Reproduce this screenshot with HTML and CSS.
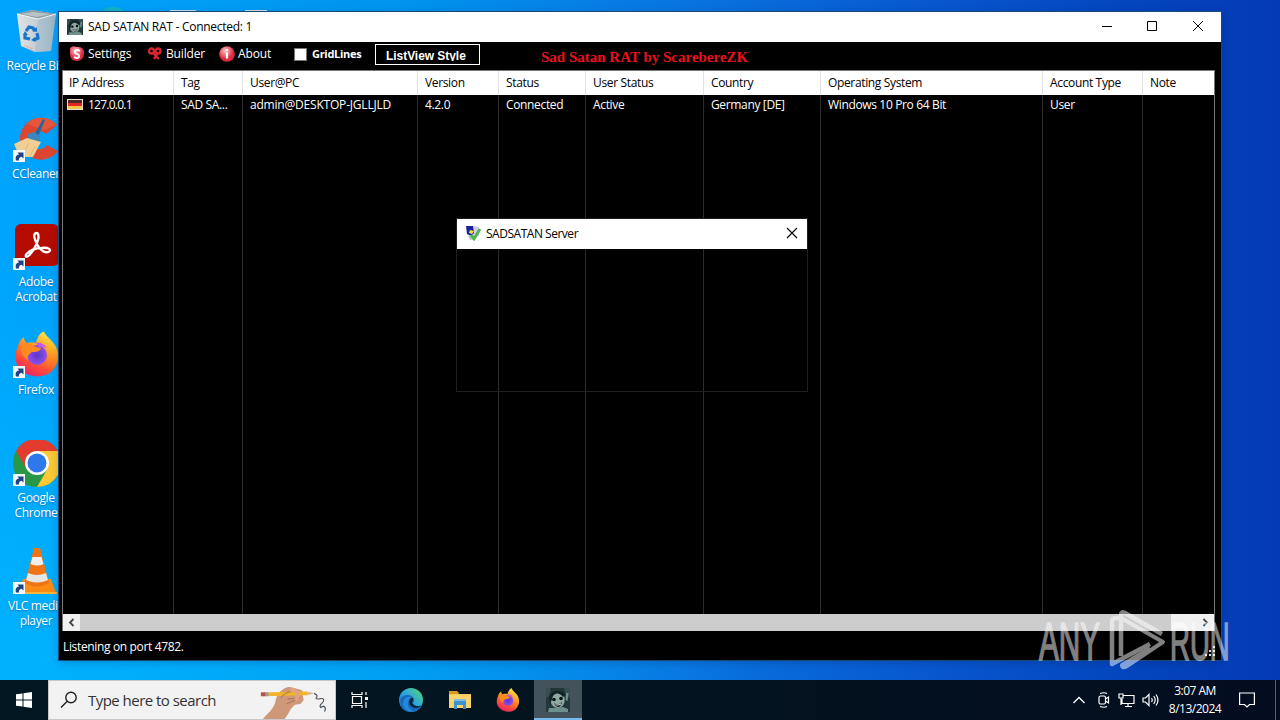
FILE: index.html
```html
<!DOCTYPE html>
<html lang="en">
<head>
<meta charset="utf-8">
<title>SAD SATAN RAT - Connected: 1</title>
<link rel="stylesheet" href="styles.css">
</head>
<body>
<svg width="0" height="0" class="defs">
  <defs>
    <linearGradient id="fox" x1="0.8" y1="0" x2="0.3" y2="1"><stop offset="0" stop-color="#fff04a"/><stop offset=".4" stop-color="#ff9a20"/><stop offset=".75" stop-color="#ff4a38"/><stop offset="1" stop-color="#e82070"/></linearGradient>
    <radialGradient id="globe"><stop offset="0" stop-color="#5b35c8"/><stop offset="1" stop-color="#9050ec"/></radialGradient>
    <linearGradient id="bin" x1="0" x2="1"><stop offset="0" stop-color="#dfe4e6"/><stop offset=".55" stop-color="#c3cdd2"/><stop offset="1" stop-color="#8fa9ba"/></linearGradient>
    <linearGradient id="edgeG" x1="0" y1="1" x2="1" y2="0"><stop offset="0" stop-color="#1264c0"/><stop offset=".5" stop-color="#2aa5e0"/><stop offset="1" stop-color="#5bd66a"/></linearGradient>
    <radialGradient id="red" cx=".4" cy=".3"><stop offset="0" stop-color="#ffc4c8"/><stop offset="1" stop-color="#dc2a40"/></radialGradient>
    <symbol id="shortcut" viewBox="0 0 12 12"><rect width="12" height="12" fill="#f5f8fa"/><path d="M3 10.500C2 7 3.500 4.800 6 4.600L4.500 2.500h6v6L8.600 6.700C6.400 7 5.600 8.500 6 10.500z" fill="#1f4484"/></symbol>
    <symbol id="firefox" viewBox="0 0 46 46">
      <path d="M4 15C5 11 7 8 10 6c0 3 1 5 3 6 3-1 6-1 9 0 1-6 4-10 8-12 1 5 7 8 11 14 6 10 3 21-4 27-8 6-21 6-29-1C0 33 0 24 4 15z" fill="url(#fox)"/>
      <circle cx="23" cy="24" r="10" fill="url(#globe)"/>
      <path d="M7 13c5-2 11 0 15 3l5 1c-1 4-6 4-9 4-3 2-5 4-4 8C8 26 6 20 7 13z" fill="#ff8a1e"/>
      <path d="M22 12c4-1 9 1 11 5-3-2-6-1-8-1z" fill="#c35af0"/>
    </symbol>
    <symbol id="face" viewBox="0 0 24 24">
      <rect width="24" height="24" fill="#0c1518"/>
      <path d="M0 3l7-3h12l5 6v18H0z" fill="#22383a"/>
      <path d="M0 0h5L3 8 0 10zM18 0h6v10l-4-2z" fill="#35504f"/>
      <path d="M5 9c2-6 11-7 13-1 2 6-1 12-6 12C7 20 3 15 5 9z" fill="#8faaa4"/>
      <path d="M3 10C5 1 15 0 20 7l-3 2c-3-4-7-5-10-1l-3 9z" fill="#142326"/>
      <circle cx="8" cy="11.500" r="1.800" fill="#091012"/><circle cx="15" cy="10.500" r="1.800" fill="#091012"/>
      <path d="M8 15q4 3 8-1-1 5-4 5-3-1-4-4z" fill="#1a1416"/>
      <path d="M9 16q3 1.500 6-.8v1.200q-3 1.800-5 .8z" fill="#dde6e2"/>
      <path d="M20 5l2.500 0-1 8-2-1zM3 20l8 0 6-1 5 2v3H2z" fill="#6f918e"/>
    </symbol>
  </defs>
</svg>

<div class="desktop">
  <div class="behind"><i class="behind-disc"></i><i class="behind-page"></i><i class="behind-page two"></i></div>
  <div class="icons">
    <div class="item">
      <svg class="pic" viewBox="0 0 48 48"><path d="M5 6l15-4 24 4-5 37-16 1-14-6z" fill="url(#bin)"/><path d="M5 6l15-4 24 4-18 5z" fill="#8a9ba2"/><path d="M9 6l12-2 18 2-14 3z" fill="#b9c4c8"/><path d="M26 11l18-5-5 37-16 1z" fill="#a3bccb" opacity=".6"/><path d="M5 6l21 5 18-5" fill="none" stroke="#f2f7f8"/><g fill="none" stroke="#1776cc" stroke-width="3.200"><path d="M14 23l3-4 4 1 2 3M25 25l1 5-4 2M18 31l-5-1 0-4"/></g><path d="M20 23l5 1 0-5zM23 29l-4 3 4 2zM11 27l2-4 3 4z" fill="#1776cc"/><path d="M13 37l8 3-1 2-9-5z" fill="#e8b7a0"/></svg>
      <span>Recycle Bin</span>
    </div>
    <div class="item">
      <svg class="pic" viewBox="0 0 48 48"><path d="M45 9A21 21 0 1 0 46 35l-11-6a9 9 0 1 1-1-11z" fill="#dc452f"/><path d="M45 9A21 21 0 0 0 14 8l18 6z" fill="#ec5f45" opacity=".6"/><path d="M31 3l2 1-8 19-4-2z" fill="#22689c"/><path d="M16 18l6-2 6 4 0 8-12-3z" fill="#3c85bd"/><path d="M15 22l14 4-8 15H8L2 28z" fill="#f1cf94"/><path d="M17 27l-5 9M23 30l-5 10" stroke="#dfb97c"/></svg>
      <svg class="arrow"><use href="#shortcut"/></svg><span>CCleaner</span>
    </div>
    <div class="item">
      <svg class="pic" viewBox="0 0 48 48"><rect x="3" width="44" height="42" rx="6" fill="#b30b00"/><path d="M24.500 9c-4 0-2 7 1 12 3 6 8 8 11 7 4-2 0-5-7-4-6 0-12 3-15 6-2 3 0 4 3 1 4-4 8-12 9-17 0-3 0-5-2-5z" fill="none" stroke="#fff" stroke-width="2.300"/></svg>
      <svg class="arrow"><use href="#shortcut"/></svg><span>Adobe<br>Acrobat</span>
    </div>
    <div class="item">
      <svg class="pic" viewBox="0 0 48 48"><use href="#firefox" x="2" y="-1" width="46" height="46"/></svg>
      <svg class="arrow"><use href="#shortcut"/></svg><span>Firefox</span>
    </div>
    <div class="item">
      <svg class="pic" viewBox="0 0 48 48"><circle cx="25" cy="23" r="24" fill="#279847"/><path d="M4.200 11A24 24 0 0 1 45.800 11H25L14.600 29z" fill="#e33b2e"/><path d="M45.800 11A24 24 0 0 1 25 47L35.400 29 25 11z" fill="#fcc934"/><circle cx="25" cy="23" r="12" fill="#fff"/><circle cx="25" cy="23" r="9.500" fill="#2f78ec"/></svg>
      <svg class="arrow"><use href="#shortcut"/></svg><span>Google<br>Chrome</span>
    </div>
    <div class="item">
      <svg class="pic" viewBox="0 0 48 48"><path d="M11 31h28l5 14H7z" fill="#f98b12"/><path d="M7 44h38v2H7z" fill="#ffb335"/><path d="M22 0q3-3 6 0l9 35q-12 7-24 0z" fill="#ee7414"/><path d="M20.500 9h9l2 7q-6 3-13 0z" fill="#f0f0ef"/><path d="M16 25q9 4 18 0l2 7q-11 5-22 0z" fill="#e6e6e5"/></svg>
      <svg class="arrow"><use href="#shortcut"/></svg><span>VLC media<br>player</span>
    </div>
  </div>

  <main class="window">
    <header class="titlebar">
      <svg class="app-icon"><use href="#face"/></svg>
      <span class="title">SAD SATAN RAT - Connected: 1</span>
      <svg class="controls" viewBox="0 0 138 30" fill="none" stroke="#000"><path d="M19 14.500h10M64.500 9.500h9v9h-9zM110 9l10 10M120 9l-10 10"/></svg>
    </header>
    <nav class="menu">
      <div class="menu-item settings"><svg viewBox="0 0 16 16"><path d="M1 2q3-3 6-1 9-1 8 7-1 7-7 7-7 0-7-7z" fill="url(#red)"/><path d="M11 5Q8 3 6 5q-1 2 2 3t2 3q-2 2-5 0" fill="none" stroke="#fff" stroke-width="1.800"/></svg><span>Settings</span></div>
      <div class="menu-item builder"><svg viewBox="0 0 16 16" fill="none" stroke="#d8262e" stroke-width="2.300"><circle cx="4.500" cy="5" r="2.500"/><circle cx="11" cy="5" r="2.500"/><path d="M6 7l6 6M11 7l-4 6"/></svg><span>Builder</span></div>
      <div class="menu-item about"><svg viewBox="0 0 16 16"><circle cx="8" cy="8" r="7.800" fill="url(#red)"/><path d="M8 3v2M8 6.500v6" stroke="#fff" stroke-width="2.200"/></svg><span>About</span></div>
      <div class="check"><i></i><span>GridLines</span></div>
      <div class="style-btn"><span>ListView Style</span></div>
      <div class="credit">Sad Satan RAT by ScarebereZK</div>
    </nav>
    <section class="list">
      <div class="row head">
        <span class="loose">IP Address</span><span>Tag</span><span>User@PC</span><span>Version</span><span>Status</span><span>User Status</span><span>Country</span><span>Operating System</span><span>Account Type</span><span>Note</span>
      </div>
      <div class="row body">
        <span class="ip"><svg viewBox="0 0 16 11"><rect width="16" height="11" fill="#e8ddd5"/><path d="M1 1h14v3H1z" fill="#4b2a26"/><path d="M1 4h14v3H1z" fill="#e32920"/><path d="M1 7h14v3H1z" fill="#f5c648"/></svg>127.0.0.1</span><span>SAD SA...</span><span class="pc">admin@DESKTOP-JGLLJLD</span><span>4.2.0</span><span>Connected</span><span>Active</span><span>Germany [DE]</span><span>Windows 10 Pro 64 Bit</span><span>User</span><span></span>
      </div>
      <div class="scroll"><svg viewBox="0 0 17 17"><path d="M10.500 5L7 8.500l3.500 3.500" fill="none" stroke="#444" stroke-width="1.800"/></svg><i></i><svg class="right" viewBox="0 0 17 17"><path d="M6.500 5L10 8.500 6.500 12" fill="none" stroke="#444" stroke-width="1.800"/></svg></div>
    </section>
    <footer class="status"><span>Listening on port 4782.</span>
      <svg viewBox="0 0 12 12" fill="#ddd"><path d="M8 0h2v2H8zM4 4h2v2H4zM8 4h2v2H8zM0 8h2v2H0zM4 8h2v2H4zM8 8h2v2H8z"/></svg>
    </footer>
  </main>

  <div class="dialog">
    <header>
      <svg class="dlg-icon" viewBox="0 0 16 16"><path d="M7 1l7 1v9H7z" fill="#d2c9ee"/><path d="M1 1l7 0 1 7-3 3-4-2z" fill="#1c2398"/><path d="M3 11l5-1 3 4-6 1z" fill="#b9c6c7"/><path d="M6 10l3 4 6-10" fill="none" stroke="#48b848" stroke-width="2.700"/><path d="M5 5l4 1-2 3-3-1z" fill="#efe63c"/></svg>
      <span>SADSATAN Server</span>
      <svg class="dlg-close" viewBox="0 0 12 12"><path d="M1 1l10 10M11 1L1 11" stroke="#000" stroke-width="1.100"/></svg>
    </header>
  </div>

  <div class="watermark">
    <span class="any">ANY</span>
    <svg viewBox="0 0 60 64" fill="none" stroke="#fff" stroke-width="4.500" stroke-linejoin="round"><path d="M10 9H7Q3 9 3 13v42L41 35"/><path d="M12 47V6Q12 2 16 4l37 21"/><path d="M12 13V9l42 24L18 57q-5 3-5-1l28-17" stroke-width="4"/></svg>
    <span class="run">RUN</span>
  </div>
</div>

<div class="taskbar">
  <div class="start"><svg viewBox="0 0 16 16" fill="#fff"><path d="M0 2.300l6.500-.9v6.100H0zM7.500 1.200L16 0v7.500H7.500zM0 8.500h6.500v6.100L0 13.700zM7.500 8.500H16V16l-8.500-1.200z"/></svg></div>
  <div class="search">
    <svg class="lens" viewBox="0 0 18 18" fill="none" stroke="#222" stroke-width="1.400"><circle cx="11" cy="6.500" r="5.200"/><path d="M7 10.500L1 16.500"/></svg>
    <span>Type here to search</span>
    <svg class="hand" viewBox="0 0 76 40"><path d="M2 40c7-7 11-11 13-17 1-8 5-13 11-16 5-2 9 1 15 2 4 1 4 4 3 6l1 5-3 4-6 1c-5 3-6 9-11 15z" fill="#cf9878"/><path d="M0 12l49-1v4L0 16z" fill="#f3b32b"/><path d="M0 12h5v4H0z" fill="#b8505c"/><path d="M5 12h3v4H5z" fill="#999"/><path d="M49 11l7 2-7 2z" fill="#d8b58c"/><path d="M21 18c3-5 8-7 15-7M27 24l10-4M28 19l13-1" stroke="#a66f55" fill="none"/><path d="M31 10q6-2 8 4 0 5-3 6" fill="none" stroke="#dda383" stroke-width="4"/><path d="M56 13q5 2 2 5c1 3 8-2 8 2 1 3-6 5-3 8 4-3 6 0 4 4" fill="none" stroke="#454d55" stroke-width="1.200"/></svg>
  </div>
  <div class="cell view"><svg viewBox="0 0 18 18" fill="none" stroke="#fff" stroke-width="1.200"><path d="M1 1v2.500h10V1M1.500 5.500h9v7h-9zM1 17v-2.500h10V17M15 1v3M15 11v6"/><path d="M14 6h3v3h-3z" fill="#fff" stroke="none"/></svg></div>
  <div class="cell edge"><svg viewBox="0 0 24 24"><circle cx="12" cy="12" r="12" fill="url(#edgeG)"/><path d="M1 12C3 6 13 5 15 11c1 3-2 4-1 6 2 3 7 2 9 0-4 8-15 9-20 3z" fill="#1768bd"/><path d="M10 12c-3 5 0 10 5 11C7 25 2 18 5 12c2-4 8-4 9-1z" fill="#2389d8"/><path d="M14 16c-2-1 1-3 0-6-3-1-5 3-3 7 3 4 8 4 12 0 0 0-5 3-9-1z" fill="#07263c"/></svg></div>
  <div class="cell files"><svg viewBox="0 0 22 20"><path d="M0 2h8l2 2h12v14H0z" fill="#f7ca57"/><path d="M0 1h8l2 2-2 1H0z" fill="#d89a20"/><path d="M0 5h22v13H0z" fill="#fbd36b"/><path d="M5 11h12v8h-3v-4H8v4H5z" fill="#3c93cf"/><path d="M5 9h12v2H5z" fill="#83bde0"/></svg></div>
  <div class="cell fx"><svg><use href="#firefox"/></svg></div>
  <div class="cell active"><svg><use href="#face"/></svg></div>
  <div class="tray">
    <svg class="chev" viewBox="0 0 12 8"><path d="M.5 7L6 1.500 11.500 7" fill="none" stroke="#fff" stroke-width="1.300"/></svg>
    <svg class="cam" viewBox="0 0 14 16" fill="none" stroke="#fff" stroke-width="1.200"><rect x="2" y="4" width="6.500" height="8" rx="1.500"/><path d="M8.500 7l3-2v6l-3-2M3 1.500q4-1.500 7 0M3 14.500q4 1.500 7 0"/></svg>
    <svg class="net" viewBox="0 0 17 15" fill="none" stroke="#fff" stroke-width="1.200"><path d="M5 2.500h11v8H4V6M7 13.500h7M10 10.500v3M1 1h4v4H1zM3 5v7"/></svg>
    <svg class="vol" viewBox="0 0 17 14" fill="none" stroke="#fff" stroke-width="1.200"><path d="M1 5h2.500L7 1.500v11L3.500 9H1zM9.500 5q1.500 2 0 4M11.700 3q3 4 0 8M14 1.500q4 5.500 0 11"/></svg>
    <div class="clock"><span>3:07 AM</span><span>8/13/2024</span></div>
    <svg class="note" viewBox="0 0 16 16" fill="none" stroke="#fff" stroke-width="1.200"><path d="M.6 1h14.800v11.500H10.500L8 15l-2.500-2.500H.6z"/></svg>
    <i class="peek"></i>
  </div>
</div>
</body>
</html>
```
FILE: styles.css
```css
* { box-sizing: border-box; }
body {
  margin: 0;
  width: 1280px;
  height: 720px;
  overflow: hidden;
  display: flex;
  flex-direction: column;
  font: 12px/15px "Open Sans", "Noto Sans", sans-serif;
  letter-spacing: -0.35px;
  color: #fff;
  white-space: nowrap;
}
svg { display: block; flex: none; }
.defs { position: absolute; }
.desktop {
  position: relative;
  height: 680px;
  background:
    linear-gradient(180deg, rgba(0, 190, 255, 0), rgba(0, 190, 255, .35)) 0 0 / 700px 100% no-repeat,
    linear-gradient(90deg, #00a4fc 0, #009ef6 180px, #0094ee 400px, #0878e2 650px, #0857cf 930px, #0446be 1120px, #043ab5 1280px);
  background:
    radial-gradient(ellipse 760px 420px at 0 100%, rgba(0, 190, 255, .55), rgba(0, 190, 255, 0)),
    linear-gradient(90deg, #00a4fc 0, #009ef6 180px, #0094ee 400px, #0878e2 650px, #0857cf 930px, #0446be 1120px, #043ab5 1280px);
}
.behind { position: absolute; left: 95px; top: 7px; width: 180px; height: 8px; overflow: hidden; }
.behind i { position: absolute; }
.behind-disc { left: 0; top: 0; width: 36px; height: 36px; border-radius: 50%; background: #14b3c5; }
.behind-page { left: 75px; top: 3px; width: 26px; height: 5px; background: #c9dcef; }
.behind-page.two { left: 150px; width: 22px; }

.icons { display: flex; flex-direction: column; width: 76px; margin-left: -2px; padding-top: 8px; }
.item { position: relative; height: 108px; display: flex; flex-direction: column; align-items: center; gap: 2px; text-align: center; text-shadow: 0 1px 2px rgba(0, 60, 120, .5); }
.pic { width: 48px; height: 48px; }
.arrow { position: absolute; left: 15px; top: 34px; width: 12px; height: 12px; }

.window {
  position: absolute;
  left: 59px;
  top: 12px;
  width: 1162px;
  height: 648px;
  background: #000;
  display: flex;
  flex-direction: column;
  box-shadow: 0 0 0 1px #174a78, 0 2px 8px rgba(0, 20, 60, .25);
}
.titlebar { height: 30px; background: #fff; color: #000; display: flex; align-items: center; padding-left: 8px; }
.app-icon { width: 16px; height: 16px; margin-right: 5px; }
.title { flex: 1; letter-spacing: -0.27px; padding-bottom: 1px; }
.controls { width: 138px; height: 30px; }
.menu { height: 28px; display: flex; align-items: flex-start; padding: 4px 0 0 10px; letter-spacing: -.15px; }
.menu-item { display: flex; align-items: center; height: 16px; gap: 3px; }
.menu-item span { padding-bottom: 1px; }
.menu-item svg { width: 16px; height: 16px; }
.settings { width: 78px; }
.builder { width: 72px; }
.about { width: 75px; }
.check { display: flex; align-items: center; gap: 5px; width: 81px; height: 16px; font-weight: 700; font-size: 11px; letter-spacing: -.3px; }
.check span { padding-bottom: 1px; }
.check i { width: 13px; height: 13px; background: #fff; border: 1px solid #777; }
.style-btn { width: 105px; height: 21px; margin-top: -2px; border: 1px solid #fff; font: bold 12px/14px "Liberation Sans", sans-serif; letter-spacing: -.05px; display: flex; align-items: flex-start; padding: 4px 0 0 10px; }
.style-btn span { height: 12px; overflow: hidden; }
.credit { margin-left: 61px; padding-top: 3px; font: bold 15px/16px "Liberation Serif", serif; letter-spacing: 0; color: #e8101c; }

.list {
  width: 1153px;
  height: 561px;
  margin-left: 3px;
  border: 1px solid #777;
  border-bottom: 0;
  display: flex;
  flex-direction: column;
}
.row { display: grid; grid-template-columns: 111px 69px 175px 81px 87px 118px 117px 222px 100px 1fr; }
.row > span { padding-left: 7px; border-right: 1px solid #2c2c2c; overflow: hidden; }
.row > span:first-child { padding-left: 6px; }
.row > span:last-child { border-right: 0; }
.row > .loose { letter-spacing: -.42px; }
.row > .pc { letter-spacing: -.2px; }
.head { height: 24px; background: #fff; color: #000; line-height: 24px; }
.head > span { border-color: #e2e2e2; }
.body { flex: 1; line-height: 20px; }
.row > .ip { display: flex; align-items: flex-start; gap: 5px; letter-spacing: -.75px; }
.row > .ip:first-child { padding-left: 4px; }
.ip svg { width: 16px; height: 11px; margin-top: 4px; }
.scroll { height: 17px; background: #f0f0f0; display: flex; }
.scroll svg { width: 17px; height: 17px; }
.scroll i { width: 1091px; background: #cdcdcd; }
.scroll .right { margin-left: auto; }
.status { flex: 1; display: flex; align-items: flex-start; justify-content: space-between; padding: 8px 3px 0 4px; }
.status svg { width: 12px; height: 12px; margin: 7px 1px 0 0; }

.dialog { position: absolute; left: 456px; top: 218px; width: 352px; height: 174px; border: 1px solid #1f1f1f; }
.dialog header { height: 30px; background: #fff; color: #000; display: flex; align-items: center; padding: 0 9px 0 8px; letter-spacing: -.48px; }
.dlg-icon { width: 16px; height: 16px; margin: -2px 5px 0 0; }
.dialog header span { flex: 1; padding-bottom: 1px; }
.dlg-close { width: 12px; height: 12px; margin-top: -2px; }

.watermark { position: absolute; left: 1039px; top: 609px; width: 194px; height: 64px; opacity: .5; display: flex; align-items: center; font: 54px/64px "Liberation Sans", sans-serif; letter-spacing: 0; -webkit-text-stroke: 1.6px #fff; }
.any, .run { width: 66px; transform: scaleX(.55); transform-origin: 0 50%; }
.watermark svg { width: 60px; height: 64px; margin: 0 1px 0 4px; }
.watermark .run { width: 60px; transform: scaleX(.51); }

.taskbar { height: 40px; background: linear-gradient(90deg, #021721 0, #03141f 560px, #040d20 1280px); display: flex; letter-spacing: 0; }
.start { width: 48px; display: flex; align-items: center; justify-content: center; }
.start svg { width: 16px; height: 16px; }
.search { width: 288px; background: #f2f2f2; border: 1px solid #c8c8c8; color: #333; display: flex; align-items: center; padding-left: 11px; font-size: 15px; letter-spacing: -.53px; }
.lens { width: 18px; height: 18px; margin-right: 10px; }
.search span { width: 171px; }
.hand { width: 76px; height: 38px; }
.cell { width: 49px; display: flex; align-items: center; justify-content: center; }
.view { width: 48px; }
.view svg { width: 18px; height: 18px; }
.edge { width: 54px; }
.edge svg { width: 24px; height: 24px; }
.files { width: 44px; }
.files svg { width: 22px; height: 20px; }
.fx { width: 52px; }
.fx svg { width: 24px; height: 24px; }
.active { width: 48px; background: #44525b; border-bottom: 2px solid #76b9ed; }
.active svg { width: 24px; height: 24px; margin-top: 1px; }
.tray { flex: 1; display: flex; align-items: center; padding-left: 491px; }
.chev { width: 12px; height: 8px; margin-right: 12px; }
.cam { width: 14px; height: 16px; margin-right: 7px; }
.net { width: 17px; height: 15px; margin-right: 7px; }
.vol { width: 17px; height: 14px; margin-right: 6px; }
.clock { width: 60px; display: flex; flex-direction: column; text-align: center; line-height: 18px; letter-spacing: -.5px; }
.note { width: 16px; height: 16px; margin-left: 14px; }
.peek { width: 1px; height: 40px; background: #55606c; margin-left: auto; margin-right: 4px; }
```
